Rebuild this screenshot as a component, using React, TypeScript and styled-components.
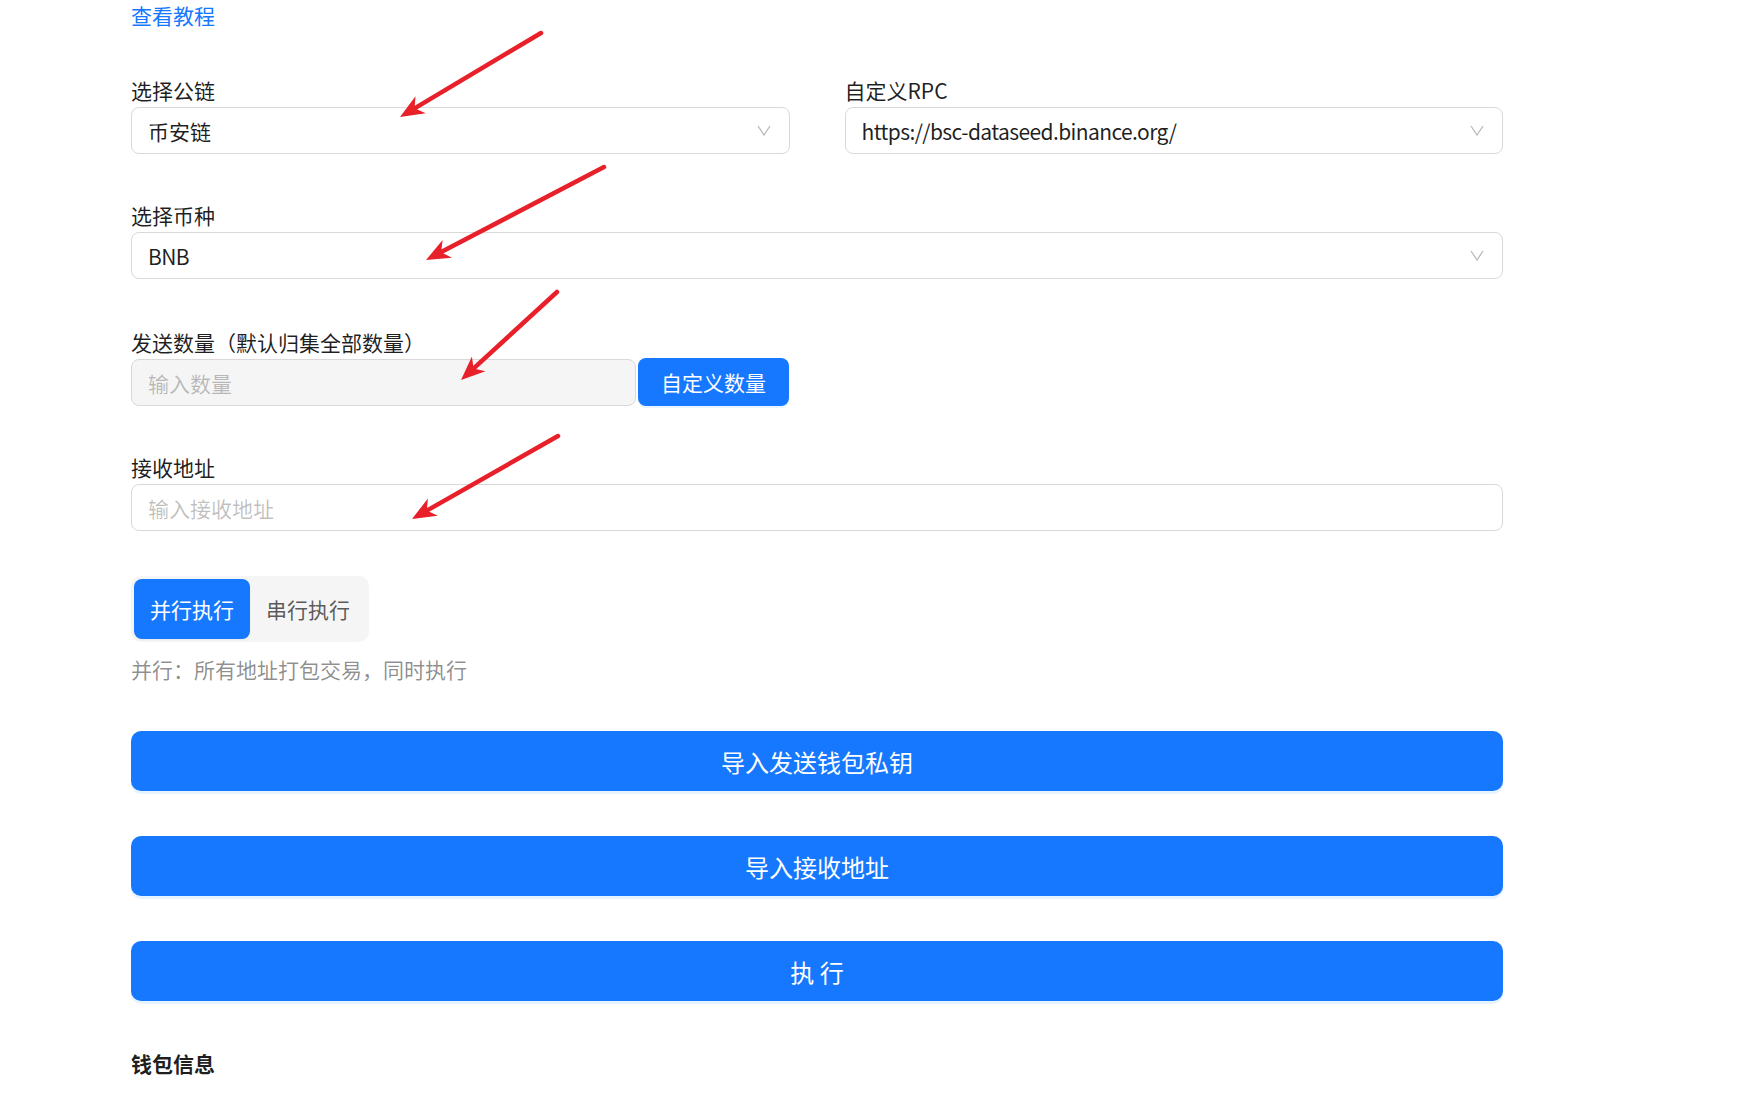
import React from "react";
import styled, { createGlobalStyle } from "styled-components";

const GlobalStyle = createGlobalStyle`
  html, body { margin: 0; padding: 0; background: #ffffff; }
  body {
    font-family: "Noto Sans CJK SC", "Noto Sans", sans-serif;
    color: rgba(0, 0, 0, 0.88);
    overflow: hidden;
  }
  * { box-sizing: border-box; }
`;

const Page = styled.div`
  position: relative;
  width: 1749px;
  height: 1103px;
  overflow: hidden;
`;

const Content = styled.div`
  width: 1372px;
  margin-left: 131px;
  display: flex;
  flex-direction: column;
`;

const TutorialLink = styled.a`
  display: block;
  margin-bottom: 47px;
  font-size: 21px;
  line-height: 30px;
  color: #1677ff;
  text-decoration: none;
  width: max-content;
`;

const Row = styled.div`
  display: grid;
  grid-template-columns: 1fr 1fr;
  column-gap: 55px;
`;

const FormItem = styled.div<{ $gap?: number }>`
  display: flex;
  flex-direction: column;
  margin-bottom: ${(p) => (p.$gap ?? 48)}px;
`;

const Label = styled.div`
  font-size: 21px;
  line-height: 26px;
  height: 30px;
  color: rgba(0, 0, 0, 0.88);
`;

const SelectBox = styled.div`
  height: 47px;
  border: 1px solid #d9d9d9;
  border-radius: 8px;
  background: #fff;
  padding: 0 18px 0 16px;
  display: flex;
  align-items: center;
  justify-content: space-between;
  font-size: 21px;
  color: rgba(0, 0, 0, 0.88);
`;

const SelectValue = styled.span<{ $latin?: boolean }>`
  white-space: nowrap;
  letter-spacing: ${(p) => (p.$latin ? "-0.6px" : "0")};
`;

const TextInput = styled.input`
  height: 47px;
  width: 100%;
  border: 1px solid #d9d9d9;
  border-radius: 8px;
  background: #fff;
  padding: 0 16px;
  font-family: inherit;
  font-size: 21px;
  color: rgba(0, 0, 0, 0.88);
  outline: none;
  &::placeholder { color: rgba(0, 0, 0, 0.25); }
  &:disabled { background: #f5f5f5; cursor: not-allowed; }
`;

const AmountGroup = styled.div`
  width: 658px;
  display: flex;
  align-items: flex-start;
  gap: 2px;
`;

const SmallPrimary = styled.button`
  flex: 0 0 151px;
  height: 48px;
  margin-top: -1px;
  border: none;
  border-radius: 8px;
  background: #1677ff;
  color: #fff;
  font-family: inherit;
  font-size: 21px;
  box-shadow: 0 2px 0 rgba(5, 145, 255, 0.1);
  cursor: pointer;
`;

const Segmented = styled.div`
  display: inline-flex;
  width: max-content;
  padding: 3px;
  background: #f5f5f5;
  border-radius: 10px;
`;

const SegItem = styled.div<{ $active?: boolean }>`
  height: 60px;
  line-height: 60px;
  padding: 0 16px;
  border-radius: 8px;
  font-size: 21px;
  background: ${(p) => (p.$active ? "#1677ff" : "transparent")};
  color: ${(p) => (p.$active ? "#fff" : "rgba(0,0,0,0.65)")};
  box-shadow: ${(p) => (p.$active ? "0 1px 2px rgba(0,0,0,0.05)" : "none")};
`;

const Hint = styled.div`
  margin-top: 12px;
  font-size: 21px;
  line-height: 30px;
  color: rgba(0, 0, 0, 0.45);
`;

const BigButton = styled.button<{ $top: number }>`
  margin-top: ${(p) => p.$top}px;
  height: 60px;
  width: 100%;
  border: none;
  border-radius: 10px;
  background: #1677ff;
  color: #fff;
  font-family: inherit;
  font-size: 24px;
  box-shadow: 0 3px 0 rgba(5, 145, 255, 0.1);
  cursor: pointer;
`;

const SectionTitle = styled.div`
  margin-top: 47px;
  font-size: 21px;
  line-height: 30px;
  font-weight: 700;
  color: rgba(0, 0, 0, 0.88);
`;

const Overlay = styled.svg`
  position: absolute;
  left: 0;
  top: 0;
  pointer-events: none;
`;

const Chevron = () => (
  <svg width="14" height="11" viewBox="0 0 14 11">
    <polyline
      points="1,1 7,10 13,1"
      fill="none"
      stroke="rgba(0,0,0,0.28)"
      strokeWidth="1.3"
    />
  </svg>
);

type Pt = [number, number];

const Arrow = ({ from, to }: { from: Pt; to: Pt }) => {
  const dx = to[0] - from[0];
  const dy = to[1] - from[1];
  const len = Math.hypot(dx, dy);
  const ux = dx / len;
  const uy = dy / len;
  const px = -uy;
  const py = ux;
  const headLen = 24;
  const headW = 10;
  const notch = 17;
  const baseX = to[0] - ux * headLen;
  const baseY = to[1] - uy * headLen;
  const nX = to[0] - ux * notch;
  const nY = to[1] - uy * notch;
  const pts = [
    [to[0], to[1]],
    [baseX + px * headW, baseY + py * headW],
    [nX, nY],
    [baseX - px * headW, baseY - py * headW],
  ]
    .map((p) => p.join(","))
    .join(" ");
  return (
    <g>
      <line
        x1={from[0]}
        y1={from[1]}
        x2={nX + ux * 2}
        y2={nY + uy * 2}
        stroke="#e8202a"
        strokeWidth="4.5"
        strokeLinecap="round"
      />
      <polygon points={pts} fill="#e8202a" />
    </g>
  );
};

export default function App() {
  return (
    <Page>
      <GlobalStyle />
      <Content>
        <TutorialLink href="#">查看教程</TutorialLink>

        <Row>
          <FormItem>
            <Label>选择公链</Label>
            <SelectBox>
              <SelectValue>币安链</SelectValue>
              <Chevron />
            </SelectBox>
          </FormItem>
          <FormItem>
            <Label>自定义RPC</Label>
            <SelectBox>
              <SelectValue $latin>https://bsc-dataseed.binance.org/</SelectValue>
              <Chevron />
            </SelectBox>
          </FormItem>
        </Row>

        <FormItem $gap={50}>
          <Label>选择币种</Label>
          <SelectBox>
            <SelectValue $latin>BNB</SelectValue>
            <Chevron />
          </SelectBox>
        </FormItem>

        <FormItem>
          <Label>发送数量（默认归集全部数量）</Label>
          <AmountGroup>
            <TextInput disabled placeholder="输入数量" />
            <SmallPrimary>自定义数量</SmallPrimary>
          </AmountGroup>
        </FormItem>

        <FormItem $gap={45}>
          <Label>接收地址</Label>
          <TextInput placeholder="输入接收地址" />
        </FormItem>

        <Segmented>
          <SegItem $active>并行执行</SegItem>
          <SegItem>串行执行</SegItem>
        </Segmented>
        <Hint>并行：所有地址打包交易，同时执行</Hint>

        <BigButton $top={47}>导入发送钱包私钥</BigButton>
        <BigButton $top={45}>导入接收地址</BigButton>
        <BigButton $top={45}>执 行</BigButton>

        <SectionTitle>钱包信息</SectionTitle>
      </Content>

      <Overlay width="1749" height="1103" viewBox="0 0 1749 1103">
        <Arrow from={[541, 33]} to={[400, 117]} />
        <Arrow from={[604, 167]} to={[426, 260]} />
        <Arrow from={[557, 292]} to={[461, 380]} />
        <Arrow from={[558, 436]} to={[412, 519]} />
      </Overlay>
    </Page>
  );
}
